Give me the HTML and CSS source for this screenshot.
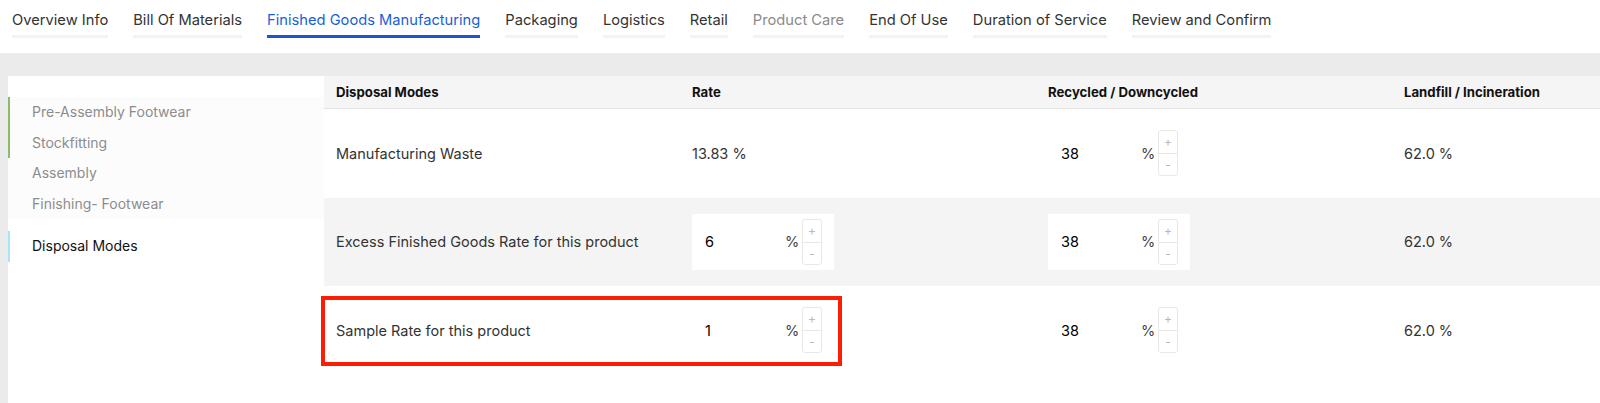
FILE: index.html
```html
<!DOCTYPE html>
<html>
<head>
<meta charset="utf-8">
<link rel="stylesheet" href="styles.css">
</head>
<body>
<nav class="tabs">
  <a class="tab">Overview Info</a>
  <a class="tab">Bill Of Materials</a>
  <a class="tab active">Finished Goods Manufacturing</a>
  <a class="tab">Packaging</a>
  <a class="tab">Logistics</a>
  <a class="tab">Retail</a>
  <a class="tab muted">Product Care</a>
  <a class="tab">End Of Use</a>
  <a class="tab">Duration of Service</a>
  <a class="tab">Review and Confirm</a>
</nav>
<main class="main">
  <div class="panel">
    <aside class="sidebar">
      <div class="group">
        <div class="item done">Pre-Assembly Footwear</div>
        <div class="item done">Stockfitting</div>
        <div class="item">Assembly</div>
        <div class="item">Finishing- Footwear</div>
      </div>
      <div class="item current">Disposal Modes</div>
    </aside>
    <section class="table">
      <div class="row head">
        <div class="cell">Disposal Modes</div>
        <div class="cell">Rate</div>
        <div class="cell">Recycled / Downcycled</div>
        <div class="cell">Landfill / Incineration</div>
      </div>
      <div class="row">
        <div class="cell">Manufacturing Waste</div>
        <div class="cell">13.83 %</div>
        <div class="cell">
          <div class="numbox"><span class="val">38</span><span class="pct">%</span><span class="stepper"><span class="step">+</span><span class="step">-</span></span></div>
        </div>
        <div class="cell">62.0 %</div>
      </div>
      <div class="row alt">
        <div class="cell">Excess Finished Goods Rate for this product</div>
        <div class="cell">
          <div class="numbox filled"><span class="val">6</span><span class="pct">%</span><span class="stepper"><span class="step">+</span><span class="step">-</span></span></div>
        </div>
        <div class="cell">
          <div class="numbox filled"><span class="val">38</span><span class="pct">%</span><span class="stepper"><span class="step">+</span><span class="step">-</span></span></div>
        </div>
        <div class="cell">62.0 %</div>
      </div>
      <div class="row marked">
        <div class="cell">Sample Rate for this product</div>
        <div class="cell">
          <div class="numbox"><span class="val">1</span><span class="pct">%</span><span class="stepper"><span class="step">+</span><span class="step">-</span></span></div>
        </div>
        <div class="cell">
          <div class="numbox"><span class="val">38</span><span class="pct">%</span><span class="stepper"><span class="step">+</span><span class="step">-</span></span></div>
        </div>
        <div class="cell">62.0 %</div>
        <div class="highlight"></div>
      </div>
    </section>
  </div>
</main>
</body>
</html>
```

FILE: styles.css
```css
* { box-sizing: border-box; }
html, body { margin: 0; padding: 0; height: 100%; overflow: hidden; }
body {
  font-family: Inter, "Noto Sans", "Liberation Sans", sans-serif;
  color: #333;
  background: #fff;
}

.tabs {
  display: flex;
  gap: 25px;
  padding: 0 12px;
  height: 53px;
  background: #fff;
}
.tab {
  display: block;
  padding-top: 9px;
  padding-bottom: 4px;
  line-height: 22px;
  font-size: 14.7px;
  color: #333;
  border-bottom: 3px solid #f3f3f3;
  height: 38px;
  white-space: nowrap;
}
.tab.muted { color: #8a8a8a; }
.tab.active { color: #1a5fd6; border-bottom-color: #1a56cf; }

.main {
  background: #ebebeb;
  padding: 23px 0 0 8px;
  height: calc(100% - 53px);
}
.panel {
  display: flex;
  background: #fff;
  height: 100%;
}

.sidebar {
  width: 316px;
  flex: none;
  padding-top: 21px;
}
.group {
  background: #fcfcfc;
  margin-bottom: 12px;
}
.item {
  height: 30.5px;
  line-height: 30px;
  padding-left: 22px;
  font-size: 14px;
  color: #8c8c8c;
  border-left: 2px solid transparent;
}
.item.done { border-left-color: #8dbb6a; }
.item.current { color: #111; border-left-color: #a6e6f6; background: #fff; }

.table {
  flex: 1;
  min-width: 0;
}
.row {
  display: grid;
  grid-template-columns: 356px 356px 356px 1fr;
  height: 88.5px;
  align-items: center;
  font-size: 14.5px;
  color: #333;
}
.row.head {
  height: 33px;
  background: #f5f5f5;
  border-bottom: 1px solid #e4e4e4;
  font-size: 13.2px;
  font-weight: 700;
  color: #111;
}
.row.alt { background: #f4f4f4; }
.row.marked { position: relative; }
.cell { padding-left: 12px; white-space: nowrap; }

.numbox {
  display: flex;
  align-items: center;
  width: 142px;
  height: 56px;
  padding-left: 13px;
  color: #000;
}
.numbox.filled { background: #fff; }
.val { width: 80px; font-size: 14.5px; }
.pct { width: 17px; color: #444; font-size: 14.5px; }
.stepper {
  display: flex;
  flex-direction: column;
  width: 20px;
  border: 1px solid #e8e8e8;
  border-radius: 3px;
}
.step {
  height: 22px;
  line-height: 21px;
  text-align: center;
  font-size: 12px;
  color: #b8b8b8;
}
.step + .step { border-top: 1px solid #e8e8e8; }

.highlight {
  position: absolute;
  left: -3px;
  top: 10px;
  width: 521px;
  height: 70px;
  border: 4px solid #fd1d04;
  pointer-events: none;
}
```
